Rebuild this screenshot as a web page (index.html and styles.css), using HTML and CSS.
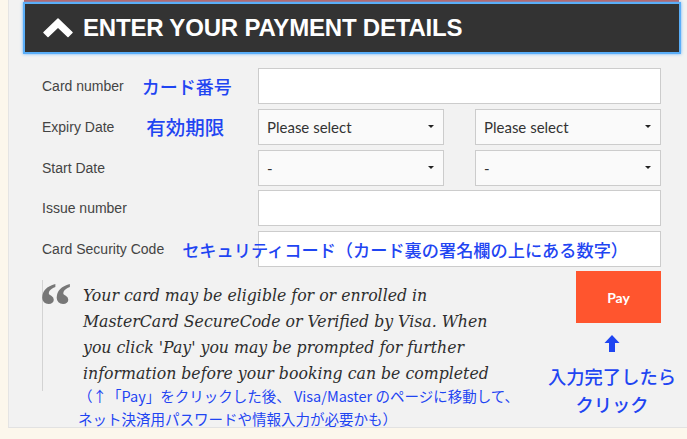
FILE: index.html
```html
<!DOCTYPE html>
<html lang="en">
<head>
    <meta charset="UTF-8">
    <meta name="viewport" content="width=device-width, initial-scale=1.0">
    <title>Payment details</title>
    <link rel="stylesheet" href="styles.css">
</head>
<body>

    <div class="panel">
        <div class="panel-rule"></div>
        <h2 class="section-head">
            <svg class="chevron" width="30" height="20" viewBox="0 0 30 20">
                <polygon points="1,14.5 15,1 29,14.5 25,18.5 15,9 5,18.5" fill="#fff" stroke="#fff" stroke-width="1.5" stroke-linejoin="round"/>
            </svg>
            <span>ENTER YOUR PAYMENT DETAILS</span>
        </h2>

        <form class="pay-form">
            <div class="form-row">
                <label class="field-label">Card number <span class="note">カード番号</span></label>
                <input type="text" class="field-input">
            </div>
            <div class="form-row">
                <label class="field-label">Expiry Date <span class="note note-wide">有効期限</span></label>
                <div class="select-pair">
                    <div class="select-box"><select><option>Please select</option></select></div>
                    <div class="select-box"><select><option>Please select</option></select></div>
                </div>
            </div>
            <div class="form-row">
                <label class="field-label">Start Date</label>
                <div class="select-pair">
                    <div class="select-box"><select><option>-</option></select></div>
                    <div class="select-box"><select><option>-</option></select></div>
                </div>
            </div>
            <div class="form-row">
                <label class="field-label">Issue number</label>
                <input type="text" class="field-input">
            </div>
            <div class="form-row">
                <label class="field-label">Card Security Code <span class="note note-small">セキュリティコード（カード裏の署名欄の上にある数字）</span></label>
                <input type="text" class="field-input">
            </div>
        </form>

        <div class="pay-area">
            <div class="quote-col">
                <blockquote class="secure-quote">
                    <span class="quote-mark">&ldquo;</span>
                    <p>Your card may be eligible for or enrolled in MasterCard SecureCode or Verified by Visa. When you click 'Pay' you may be prompted for further information before your booking can be completed</p>
                </blockquote>
                <p class="jp-hint">（↑「Pay」をクリックした後、 Visa/Master のページに移動して、<br>ネット決済用パスワードや情報入力が必要かも）</p>
            </div>
            <div class="pay-col">
                <button type="button" class="pay-btn">Pay</button>
                <svg class="pay-arrow" width="16" height="17" viewBox="0 0 16 17">
                    <polygon points="8,0 15.5,8 11,8 11,17 5,17 5,8 0.5,8" fill="#1f45f2"/>
                </svg>
                <p class="pay-hint">入力完了したら<br>クリック</p>
            </div>
        </div>
    </div>

</body>
</html>
```

FILE: styles.css
```css
body {
    margin: 0;
    background-color: #fcf7ec;
    font-family: "Liberation Sans", Arial, sans-serif;
}
.panel {
    box-sizing: border-box;
    height: 428px;
    margin-left: 8px;
    background-color: #f2f2f2;
    border-left: 1px solid #e4e4e4;
    border-bottom: 1px solid #e2e2e2;
}
.panel-rule {
    height: 2px;
    margin: 0 8px 0 15px;
    background-color: #c0605b;
}
.section-head {
    display: flex;
    align-items: center;
    height: 48px;
    margin: 0 6px 0 14px;
    padding-left: 18px;
    background-color: #333;
    border: 2px solid #5aaef8;
    box-shadow: 0 0 3px rgba(90, 170, 250, 0.9);
    color: #fff;
    font-size: 24px;
    font-weight: bold;
    letter-spacing: -0.2px;
}
.chevron {
    margin-right: 10px;
}

/* form rows */
.pay-form {
    display: flex;
    flex-direction: column;
    gap: 4.75px;
    padding: 14px 0 0 33px;
}
.form-row {
    display: grid;
    grid-template-columns: 216px 403px;
    height: 36px;
}
.field-label {
    display: flex;
    align-items: center;
    font-size: 14px;
    color: #444;
    white-space: nowrap;
}
.note {
    position: relative;
    z-index: 1;
    margin-left: 18px;
    color: #1f45f2;
    font-family: "Noto Sans CJK JP", sans-serif;
    font-weight: 500;
    font-size: 18px;
}
.note-wide {
    margin-left: 32px;
    font-size: 19.5px;
}
.note-small {
    font-size: 17.2px;
}
.field-input {
    box-sizing: border-box;
    width: 100%;
    height: 36px;
    margin: 0;
    border: 1px solid #ccc;
    background-color: #fff;
}
.select-pair {
    display: grid;
    grid-template-columns: 1fr 1fr;
    column-gap: 31px;
}
.select-box {
    position: relative;
}
.select-box select {
    box-sizing: border-box;
    width: 100%;
    height: 36px;
    padding: 0 8px;
    border: 1px solid #ccc;
    border-radius: 0;
    background-color: #fafafa;
    color: #333;
    font-family: Lato, sans-serif;
    font-size: 15px;
    appearance: none;
    -webkit-appearance: none;
}
.select-box::after {
    content: "";
    position: absolute;
    right: 10px;
    top: 16px;
    border-left: 3px solid transparent;
    border-right: 3px solid transparent;
    border-top: 3px solid #222;
    pointer-events: none;
}

/* quote + pay button */
.pay-area {
    display: flex;
    padding: 4px 0 0 33px;
}
.quote-col {
    width: 500px;
}
.secure-quote {
    position: relative;
    margin: 9px 0 0;
    padding: 2px 0 5px 40px;
    border-left: 1px solid #d3d3d3;
}
.secure-quote p {
    width: 420px;
    margin: 0;
    color: #2e2e2e;
    font-family: "DejaVu Serif Condensed", "DejaVu Serif", serif;
    font-stretch: condensed;
    font-style: italic;
    font-size: 17.5px;
    line-height: 26px;
}
.quote-mark {
    position: absolute;
    left: -4px;
    top: -7px;
    color: #777;
    font-family: "Liberation Serif", serif;
    font-weight: bold;
    font-size: 66px;
    line-height: 1;
}
.jp-hint {
    margin: -7px 0 0 36px;
    color: #1f45f2;
    font-family: "Noto Sans CJK JP", sans-serif;
    font-size: 14.5px;
    line-height: 23px;
    white-space: nowrap;
}
.pay-col {
    width: 140px;
}
.pay-btn {
    display: block;
    width: 85px;
    height: 52px;
    margin-left: 34px;
    border: none;
    background-color: #ff552e;
    color: #fff;
    font-family: Lato, sans-serif;
    font-weight: bold;
    font-size: 14px;
    cursor: pointer;
}
.pay-arrow {
    display: block;
    margin: 12px auto 0;
}
.pay-hint {
    margin: 10px 0 0;
    text-align: center;
    color: #1f45f2;
    font-family: "Noto Sans CJK JP", sans-serif;
    font-weight: 500;
    font-size: 18.3px;
    line-height: 28px;
    white-space: nowrap;
}
```
